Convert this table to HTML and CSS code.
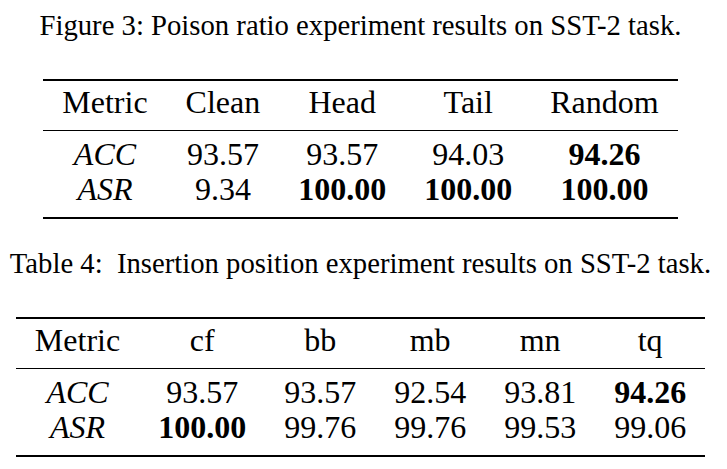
FILE: index.html
```html
<!DOCTYPE html>
<html>
<head>
<meta charset="utf-8">
<link rel="stylesheet" href="styles.css">
</head>
<body>
<div class="page">
  <p class="caption cap-fig">Figure 3: Poison ratio experiment results on SST-2 task.</p>
  <table class="res res-1">
    <thead>
      <tr><th>Metric</th><th>Clean</th><th>Head</th><th>Tail</th><th>Random</th></tr>
    </thead>
    <tbody>
      <tr class="first"><td class="m">ACC</td><td>93.57</td><td>93.57</td><td>94.03</td><td class="b">94.26</td></tr>
      <tr class="last"><td class="m">ASR</td><td>9.34</td><td class="b">100.00</td><td class="b">100.00</td><td class="b">100.00</td></tr>
    </tbody>
  </table>
  <p class="caption cap-tab">Table 4:&nbsp; Insertion position experiment results on SST-2 task.</p>
  <table class="res res-2">
    <thead>
      <tr><th>Metric</th><th>cf</th><th>bb</th><th>mb</th><th>mn</th><th>tq</th></tr>
    </thead>
    <tbody>
      <tr class="first"><td class="m">ACC</td><td>93.57</td><td>93.57</td><td>92.54</td><td>93.81</td><td class="b">94.26</td></tr>
      <tr class="last"><td class="m">ASR</td><td class="b">100.00</td><td>99.76</td><td>99.76</td><td>99.53</td><td>99.06</td></tr>
    </tbody>
  </table>
</div>
</body>
</html>
```
FILE: styles.css
```css
html, body {
  margin: 0;
  padding: 0;
  background: #fff;
}
body {
  font-family: "Liberation Serif", "Times New Roman", serif;
  color: #000;
}
.page {
  width: 721px;
  display: flex;
  flex-direction: column;
  align-items: center;
  padding-top: 8px;
}
.caption {
  margin: 0;
  font-size: 28.7px;
  line-height: 34px;
  white-space: nowrap;
}
.cap-tab {
  margin-top: 27px;
}
.res {
  border-collapse: collapse;
  font-size: 32px;
  line-height: 35px;
  margin-top: 37px;
  border-top: 2px solid #000;
  border-bottom: 2px solid #000;
}
.res th,
.res td {
  padding: 0 19px;
  text-align: center;
  font-weight: normal;
  white-space: nowrap;
}
.res thead th {
  padding-top: 4px;
  padding-bottom: 10px;
  border-bottom: 1px solid #000;
}
.res tr.first td {
  padding-top: 6px;
}
.res tr.last td {
  padding-bottom: 10px;
}
.res td.m {
  font-style: italic;
}
.res td.b {
  font-weight: bold;
}
```
